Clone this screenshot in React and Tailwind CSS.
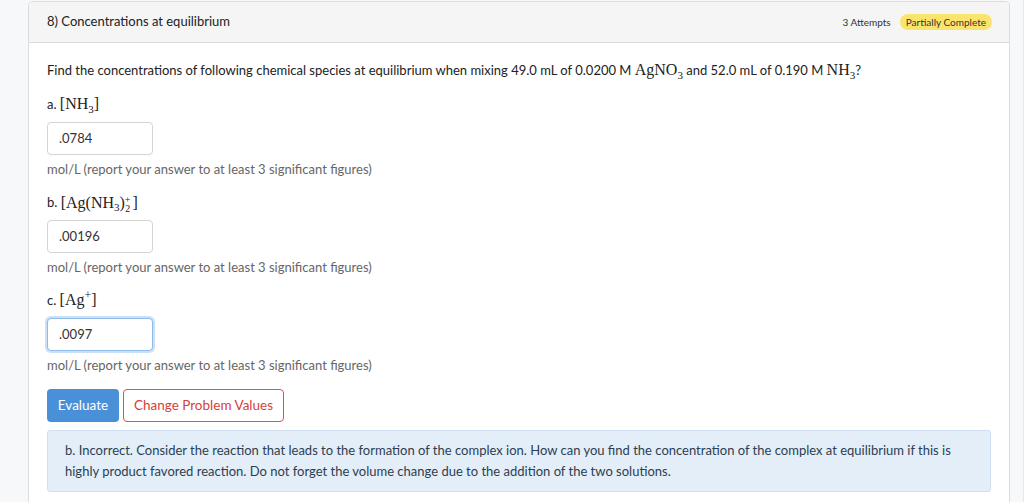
import React from "react";

const sans = { fontFamily: "Lato, 'Noto Sans', sans-serif" };

// small helpers for the chem formulas
const M = ({ children }) => (
  <span className="font-['Liberation_Serif',serif] text-[16px] text-[#222] leading-none">{children}</span>
);
const Sub = ({ children }) => (
  <span className="relative top-[4px] text-[11px] leading-none">{children}</span>
);

const Answer = ({ label, value, focused }) => (
  <div>
    <div className="h-[22px] flex items-center text-[13px] text-[#222]">{label}</div>
    <div className="mt-[6px]">
      <div
        className={
          "w-[106px] h-[33px] flex items-center pl-[11px] rounded-[4px] bg-white text-[13px] text-[#333] " +
          (focused
            ? "border border-[#8fbbe8] shadow-[0_0_0_2px_rgba(102,165,230,0.35)]"
            : "border border-[#d4d4d4]")
        }
      >
        {value}
      </div>
    </div>
    <div className="mt-[5px] h-[20px] flex items-center text-[13px] text-[#666]">
      mol/L (report your answer to at least 3 significant figures)
    </div>
  </div>
);

export default function App() {
  return (
    <div className="h-[502px] overflow-hidden bg-[#f7f8fa] flex" style={sans}>
      <div className="ml-[28px] w-[982px] mt-[1px] bg-white border border-[#dcdcdc] rounded-t-[5px] h-[560px]">
        {/* header */}
        <div className="h-[41px] bg-[#f5f5f5] border-b border-[#dcdcdc] rounded-t-[5px] flex items-center justify-between pl-[18px] pr-[17px]">
          <span className="text-[13px] text-[#222]">8) Concentrations at equilibrium</span>
          <div className="flex items-center gap-[9px]">
            <span className="text-[10px] text-[#333]">3 Attempts</span>
            <span className="bg-[#fbe46b] rounded-full px-[6px] h-[16px] flex items-center text-[10px] text-[#333]">
              Partially Complete
            </span>
          </div>
        </div>

        {/* body */}
        <div className="px-[18px] pt-[17px]">
          <div className="h-[22px] flex items-center text-[13px] text-[#222]">
            <span>
              Find the concentrations of following chemical species at equilibrium when mixing 49.0 mL of 0.0200 M{" "}
              <M>
                AgNO<Sub>3</Sub>
              </M>{" "}
              and 52.0 mL of 0.190 M{" "}
              <M>
                NH<Sub>3</Sub>
              </M>
              ?
            </span>
          </div>

          <div className="mt-[12px] flex flex-col gap-[12px]">
            <Answer
              label={
                <span>
                  a.{" "}
                  <M>
                    [NH<Sub>3</Sub>]
                  </M>
                </span>
              }
              value=".0784"
            />
            <Answer
              label={
                <span className="flex items-center">
                  b.&nbsp;
                  <M>
                    <span className="inline-flex items-center">
                      [Ag(NH<Sub>3</Sub>)
                      <span className="inline-flex flex-col items-center text-[10px] leading-[9px] relative top-[1px]">
                        <span>+</span>
                        <span>2</span>
                      </span>
                      <span className="ml-[2px]">]</span>
                    </span>
                  </M>
                </span>
              }
              value=".00196"
            />
            <Answer
              label={
                <span>
                  c.{" "}
                  <M>
                    [Ag<span className="relative top-[-6px] text-[12px] leading-none">+</span>]
                  </M>
                </span>
              }
              value=".0097"
              focused
            />
          </div>

          <div className="mt-[13px] flex gap-[4px]">
            <button className="h-[33px] w-[72px] rounded-[4px] bg-[#4a90d9] text-white text-[13.5px]">
              Evaluate
            </button>
            <button className="h-[33px] w-[161px] rounded-[4px] border border-[#d9534f] text-[#d43f3a] text-[13.5px] bg-white">
              Change Problem Values
            </button>
          </div>

          <div className="mt-[8px] bg-[#e3eef9] border border-[#cfe0f2] rounded-[3px] px-[17px] py-[9px] text-[13px] leading-[21px] text-[#2c3e50]">
            b. Incorrect. Consider the reaction that leads to the formation of the complex ion. How can you find the
            concentration of the complex at equilibrium if this is highly product favored reaction. Do not forget the
            volume change due to the addition of the two solutions.
          </div>
        </div>
      </div>
      <div className="ml-auto w-[1px] bg-[#e8e8ea]" />
    </div>
  );
}
